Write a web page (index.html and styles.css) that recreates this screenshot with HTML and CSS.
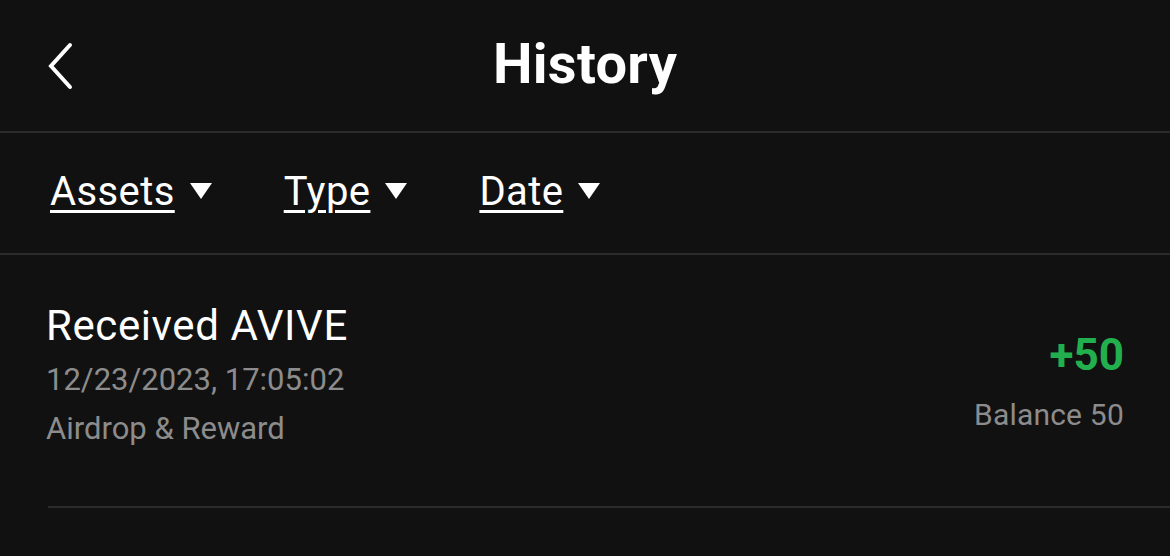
FILE: index.html
```html
<!DOCTYPE html>
<html>
<head>
<meta charset="utf-8">
<link rel="stylesheet" href="styles.css">
</head>
<body>
<div class="page">
  <header class="header">
    <button class="back" aria-label="Back">
      <svg width="30" height="50" viewBox="0 0 30 50"><polyline points="23,3 4,24 23,45" fill="none" stroke="#fff" stroke-width="4" stroke-linecap="round" stroke-linejoin="miter"/></svg>
    </button>
    <h1 class="title">History</h1>
  </header>
  <nav class="filters">
    <div class="filter"><span class="filter-label">Assets</span><span class="caret"></span></div>
    <div class="filter"><span class="filter-label">Type</span><span class="caret"></span></div>
    <div class="filter"><span class="filter-label">Date</span><span class="caret"></span></div>
  </nav>
  <section class="row">
    <div class="row-left">
      <div class="row-title">Received AVIVE</div>
      <div class="row-meta">12/23/2023, 17:05:02</div>
      <div class="row-meta">Airdrop &amp; Reward</div>
    </div>
    <div class="row-right">
      <div class="amount">+50</div>
      <div class="balance">Balance 50</div>
    </div>
  </section>
</div>
</body>
</html>
```

FILE: styles.css
```css
* { box-sizing: border-box; }
html, body { margin: 0; padding: 0; background: #111111; }
body { font-family: Roboto, "Noto Sans", sans-serif; color: #ffffff; width: 1170px; height: 556px; overflow: hidden; }
.page { display: flex; flex-direction: column; }
.header {
  position: relative;
  height: 133px;
  border-bottom: 2px solid #2b2b2b;
  display: flex;
  align-items: center;
  justify-content: center;
}
.back {
  position: absolute;
  left: 47px;
  top: 42px;
  background: none;
  border: 0;
  padding: 0;
  display: flex;
}
.title {
  margin: 0;
  font-size: 56px;
  font-weight: 700;
  letter-spacing: 0.3px;
  line-height: 1;
  padding-bottom: 4px;
}
.filters {
  height: 122px;
  border-bottom: 2px solid #2b2b2b;
  display: flex;
  align-items: center;
  padding: 0 0 2px 50px;
  gap: 72px;
}
.filter { display: flex; align-items: center; gap: 15px; }
.filter-label {
  font-size: 40px;
  line-height: 1;
  letter-spacing: 0.4px;
  text-decoration: underline;
  text-decoration-thickness: 3px;
  text-underline-offset: 5px;
}
.caret {
  width: 0; height: 0;
  border-left: 11px solid transparent;
  border-right: 11px solid transparent;
  border-top: 16px solid #ffffff;
  margin-top: -3px;
}
.row {
  margin-left: 48px;
  height: 253px;
  border-bottom: 2px solid #2b2b2b;
  display: flex;
  justify-content: space-between;
  padding-right: 46px;
}
.row-left { padding-top: 47px; margin-left: -2px; }
.row-title { font-size: 42px; letter-spacing: 0.6px; line-height: 48px; color: #ffffff; margin-bottom: 5px; }
.row-meta { font-size: 31px; line-height: 49px; color: #8c8c8c; }
.row-right { padding-top: 76px; display: flex; flex-direction: column; align-items: flex-end; }
.amount { font-size: 44px; font-weight: 700; color: #22b04f; line-height: 48px; }
.balance { font-size: 30px; letter-spacing: 0.2px; color: #8c8c8c; line-height: 40px; margin-top: 16px; }
```
